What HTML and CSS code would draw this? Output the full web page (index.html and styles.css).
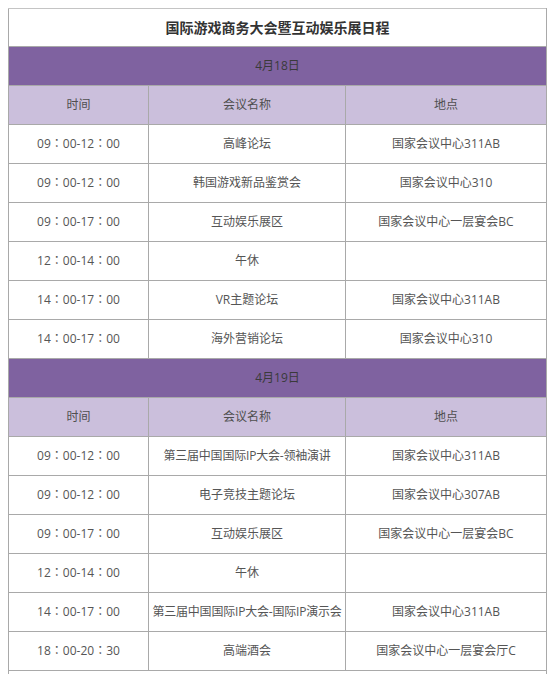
FILE: index.html
```html
<!DOCTYPE html>
<html lang="zh-CN">
<head>
<meta charset="utf-8">
<title>国际游戏商务大会暨互动娱乐展日程</title>
<link rel="stylesheet" href="styles.css">
</head>
<body>
<table class="schedule">
  <colgroup>
    <col class="c-time">
    <col class="c-name">
    <col class="c-place">
  </colgroup>
  <tbody>
    <tr class="title-row"><td colspan="3">国际游戏商务大会暨互动娱乐展日程</td></tr>
    <tr class="date-row"><td colspan="3">4月18日</td></tr>
    <tr class="head-row"><td>时间</td><td>会议名称</td><td>地点</td></tr>
    <tr><td class="time">09：00-12：00</td><td>高峰论坛</td><td>国家会议中心311AB</td></tr>
    <tr><td class="time">09：00-12：00</td><td>韩国游戏新品鉴赏会</td><td>国家会议中心310</td></tr>
    <tr><td class="time">09：00-17：00</td><td>互动娱乐展区</td><td>国家会议中心一层宴会BC</td></tr>
    <tr><td class="time">12：00-14：00</td><td>午休</td><td></td></tr>
    <tr><td class="time">14：00-17：00</td><td>VR主题论坛</td><td>国家会议中心311AB</td></tr>
    <tr><td class="time">14：00-17：00</td><td>海外营销论坛</td><td>国家会议中心310</td></tr>
    <tr class="date-row"><td colspan="3">4月19日</td></tr>
    <tr class="head-row"><td>时间</td><td>会议名称</td><td>地点</td></tr>
    <tr><td class="time">09：00-12：00</td><td class="tight">第三届中国国际IP大会-领袖演讲</td><td>国家会议中心311AB</td></tr>
    <tr><td class="time">09：00-12：00</td><td>电子竞技主题论坛</td><td>国家会议中心307AB</td></tr>
    <tr><td class="time">09：00-17：00</td><td>互动娱乐展区</td><td>国家会议中心一层宴会BC</td></tr>
    <tr><td class="time">12：00-14：00</td><td>午休</td><td></td></tr>
    <tr><td class="time">14：00-17：00</td><td class="tight">第三届中国国际IP大会-国际IP演示会</td><td>国家会议中心311AB</td></tr>
    <tr><td class="time">18：00-20：30</td><td>高端酒会</td><td>国家会议中心一层宴会厅C</td></tr>
    <tr class="blank-row"><td colspan="3">&nbsp;</td></tr>
  </tbody>
</table>
</body>
</html>
```

FILE: styles.css
```css
html, body {
  margin: 0;
  padding: 0;
  background: #ffffff;
}

body {
  padding: 8px 0 0 8px;
  font-family: "Open Sans", "Noto Sans CJK SC", sans-serif;
  color: #555555;
}

.schedule {
  width: 538px;
  border-collapse: collapse;
  table-layout: fixed;
  border: 1px solid #c4c4c4;
}

.c-time { width: 140px; }
.c-name { width: 197px; }
.c-place { width: 201px; }

.schedule td {
  height: 38px;
  padding: 0;
  border: 1px solid #a9a9a9;
  text-align: center;
  vertical-align: middle;
  font-size: 12px;
  line-height: 16px;
  white-space: nowrap;
  overflow: hidden;
}

.schedule td.time {
  font-family: "Open Sans", "Noto Sans CJK JP", sans-serif;
}

.schedule td.tight {
  letter-spacing: -0.2px;
}

.title-row td {
  height: 37px;
  font-size: 14px;
  font-weight: bold;
  color: #333333;
  border-top-color: #c4c4c4;
}

.date-row td {
  background: #7f62a0;
  color: #3a3a3a;
}

.head-row td {
  background: #cbbfdc;
  color: #4f4f4f;
}

.blank-row td {
  height: 20px;
}
```
